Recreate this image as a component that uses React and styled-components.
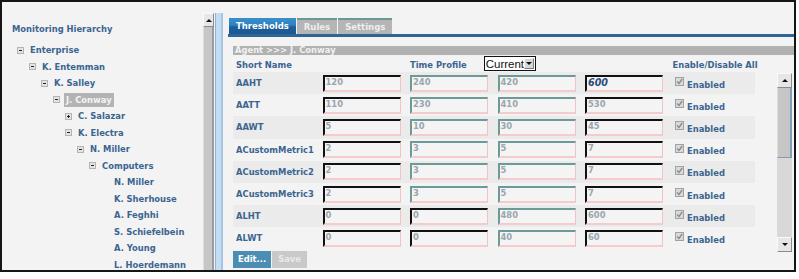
import React from "react"
import styled, { createGlobalStyle } from "styled-components"

const GlobalStyle = createGlobalStyle`
  body {
    margin: 0;
    background: #ffffff;
    font-family: "DejaVu Sans", Verdana, sans-serif;
  }
`;

const BLUE = "#3b6590";

const Frame = styled.div`
  width: 796px;
  height: 272px;
  box-sizing: border-box;
  border: 2px solid #151515;
  background: #f3f3f3;
  padding-top: 11px;
  display: flex;
  overflow: hidden;
`;

const LeftPanel = styled.div`
  width: 201px;
  flex: none;
  padding-left: 10px;
  box-sizing: border-box;
  overflow: hidden;
`;

const Heading = styled.div`
  margin-top: 8px;
  line-height: 16px;
  font-size: 8.4px;
  font-weight: 700;
  color: ${BLUE};
`;

const Tree = styled.div`
  margin-top: 4.75px;
  padding-left: 5px;
`;

const TreeRow = styled.div`
  display: flex;
  align-items: center;
  height: 16.5px;
  padding-left: ${p => p.$depth * 12}px;
  font-size: 8.4px;
  font-weight: 700;
  color: ${BLUE};
  white-space: nowrap;
`;

const Toggle = styled.span`
  position: relative;
  width: 7px;
  height: 7px;
  flex: none;
  margin-right: 6px;
  box-sizing: border-box;
  border: ${p => (p.$leaf ? "none" : "1px solid #b4b4b4")};
  background: ${p => (p.$leaf ? "transparent" : "#e4e4e4")};
  &::after {
    content: "";
    display: ${p => (p.$leaf ? "none" : "block")};
    position: absolute;
    left: 1px;
    top: 2px;
    width: 3px;
    height: 1px;
    background: #222;
  }
  &::before {
    content: "";
    display: ${p => (p.$closed ? "block" : "none")};
    position: absolute;
    left: 2px;
    top: 1px;
    width: 1px;
    height: 3px;
    background: #222;
  }
`;

const NodeLabel = styled.span`
  line-height: 14px;
  padding: 0 2px;
  margin-left: -2px;
  background: ${p => (p.$selected ? "#b3b3b3" : "transparent")};
  color: ${p => (p.$selected ? "#f4f4f4" : BLUE)};
`;

const VScroll = styled.div`
  width: ${p => p.$w}px;
  flex: none;
  display: flex;
  flex-direction: column;
  box-sizing: border-box;
  background: #d6d6d6;
`;

const ScrollBtn = styled.div`
  height: ${p => p.$h}px;
  flex: none;
  box-sizing: border-box;
  background: #e6e6e6;
  border: 1px solid;
  border-color: #fafafa #8a8a8a #8a8a8a #fafafa;
  display: flex;
  align-items: center;
  justify-content: center;
  &::after {
    content: "";
    border-left: 3px solid transparent;
    border-right: 3px solid transparent;
    ${p => (p.$down ? "border-top: 3px solid #111;" : "border-bottom: 3px solid #111;")}
  }
`;

const Thumb = styled.div`
  height: ${p => (p.$h ? `${p.$h}px` : "auto")};
  flex: ${p => (p.$h ? "none" : "1")};
  box-sizing: border-box;
  background: #c6c6c6;
  border-left: 1px solid #dedede;
  border-right: 2px solid ${p => p.$edge};
  border-bottom: ${p => (p.$h ? `1px solid ${p.$edge}` : "none")};
`;

const Track = styled.div`
  flex: 1;
  background: #d8d8d8;
`;

const Strip = styled.div`
  width: 8px;
  flex: none;
  margin-left: 1px;
  box-sizing: border-box;
  background: #c6dcf1;
  border-left: 1px solid #8fb4dc;
  border-right: 2px solid #a6c4e6;
`;

const RightPanel = styled.div`
  flex: 1;
  min-width: 0;
  display: flex;
  flex-direction: column;
`;

const TabBar = styled.div`
  display: flex;
  align-items: flex-end;
  margin: 5px 0 0 5px;
  padding-left: 1px;
  border-bottom: 3px solid #2f6596;
`;

const Tab = styled.div`
  height: 16px;
  line-height: ${p => (p.$active ? "16px" : "14px")};
  padding: 0 7px;
  margin-right: 1px;
  box-sizing: border-box;
  font-size: 8.5px;
  font-weight: 700;
  color: ${p => (p.$active ? "#ffffff" : "#eeeeee")};
  background: ${p =>
    p.$active
      ? "linear-gradient(#3a8fcb 0%, #2d82c2 45%, #1f5f9b 55%, #1b5790 100%)"
      : "#b5b5b5"};
  border-top: ${p => (p.$active ? "none" : "2px solid #6a9893")};
`;

const Content = styled.div`
  padding-left: 10px;
  display: flex;
  flex-direction: column;
`;

const Crumb = styled.div`
  margin-top: 9px;
  height: 9px;
  line-height: 9px;
  padding-left: 2px;
  background: #b1b1b1;
  color: #f2f2f2;
  font-size: 8.4px;
  font-weight: 700;
`;

const Body = styled.div`
  display: flex;
  align-items: flex-start;
`;

const Table = styled.div`
  width: 522px;
  flex: none;
`;

const GridRow = styled.div`
  display: grid;
  grid-template-columns: 80px repeat(4, 78px) 1fr;
  column-gap: 9.5px;
  align-items: center;
  height: ${p => p.$h}px;
  background: ${p => (p.$shade ? "#ebebeb" : "transparent")};
  font-size: 8.4px;
  font-weight: 700;
  color: ${BLUE};
`;

const NameCell = styled.div`
  padding-left: 3px;
  white-space: nowrap;
`;

const HeadName = styled.div`
  grid-column: 1 / span 2;
  padding-left: 3px;
  padding-top: 2px;
`;

const ProfileCell = styled.div`
  grid-column: 3 / span 3;
  display: flex;
  align-items: center;
`;

const ProfileLabel = styled.span`
  padding-top: 2px;
`;

const Select = styled.div`
  margin-left: 17px;
  width: 52px;
  height: 15px;
  box-sizing: border-box;
  border: 1px solid #111;
  background: #ffffff;
  display: flex;
  align-items: center;
  font-family: "Liberation Sans", Arial, sans-serif;
  font-weight: 400;
  font-size: 11.5px;
  color: #111;
  padding-left: 1px;
`;

const SelectText = styled.span`
  flex: 1;
`;

const SelectBtn = styled.span`
  width: 11px;
  height: 11px;
  margin-right: 1px;
  box-sizing: border-box;
  background: #d8d8d8;
  border: 1px solid;
  border-color: #f6f6f6 #7a7a7a #7a7a7a #f6f6f6;
  display: flex;
  align-items: center;
  justify-content: center;
  &::after {
    content: "";
    border-left: 3px solid transparent;
    border-right: 3px solid transparent;
    border-top: 3px solid #111;
  }
`;

const HeadAll = styled.div`
  justify-self: end;
  padding-right: 2px;
  padding-top: 2px;
  white-space: nowrap;
`;

const Field = styled.div`
  height: 17px;
  box-sizing: border-box;
  border-top: 2px solid ${p => (p.$tone === "d" ? "#111" : "#6d9a97")};
  border-left: 2px solid ${p => (p.$tone === "d" ? "#111" : "#6d9a97")};
  border-right: 1px solid #f0c4c4;
  border-bottom: 2px solid #f4cccc;
  background: #f4f4f4;
  padding-left: 1px;
  line-height: 11px;
  font-size: ${p => (p.$emph ? "9.6px" : "8.4px")};
  font-style: ${p => (p.$emph ? "italic" : "normal")};
  color: ${p => (p.$emph ? "#2d4b7b" : "#9aa5ad")};
`;

const EnabledCell = styled.div`
  display: flex;
  align-items: center;
  padding-left: 2.5px;
`;

const Check = styled.span`
  width: 9px;
  height: 9px;
  box-sizing: border-box;
  margin-top: -3px;
  margin-right: 3px;
  border: 1px solid #a2a2a2;
  background: #d9d9d9;
  display: flex;
`;

const EnabledText = styled.span`
  padding-top: 3px;
`;

const Buttons = styled.div`
  display: flex;
  gap: 1px;
  margin-top: 1.4px;
`;

const Button = styled.div`
  height: 17px;
  line-height: 17px;
  padding: 0 ${p => p.$pad}px;
  font-size: 8.4px;
  font-weight: 700;
  color: ${p => (p.$primary ? "#ffffff" : "#e9e9e9")};
  background: ${p => (p.$primary ? "#4c8db3" : "#c9c9c9")};
`;

const treeNodes = [
  { label: "Enterprise", depth: 0 },
  { label: "K. Entemman", depth: 1 },
  { label: "K. Salley", depth: 2 },
  { label: "J. Conway", depth: 3, selected: true },
  { label: "C. Salazar", depth: 4, closed: true },
  { label: "K. Electra", depth: 4 },
  { label: "N. Miller", depth: 5 },
  { label: "Computers", depth: 6 },
  { label: "N. Miller", depth: 7, leaf: true },
  { label: "K. Sherhouse", depth: 7, leaf: true },
  { label: "A. Feghhi", depth: 7, leaf: true },
  { label: "S. Schiefelbein", depth: 7, leaf: true },
  { label: "A. Young", depth: 7, leaf: true },
  { label: "L. Hoerdemann", depth: 7, leaf: true },
];

const metrics = [
  { name: "AAHT", vals: ["120", "240", "420", "600"], tones: "dttd", emph: 3 },
  { name: "AATT", vals: ["110", "230", "410", "530"], tones: "dttd" },
  { name: "AAWT", vals: ["5", "10", "30", "45"], tones: "dttd" },
  { name: "ACustomMetric1", vals: ["2", "3", "5", "7"], tones: "dttd" },
  { name: "ACustomMetric2", vals: ["2", "3", "5", "7"], tones: "dttd" },
  { name: "ACustomMetric3", vals: ["2", "3", "5", "7"], tones: "dttd" },
  { name: "ALHT", vals: ["0", "0", "480", "600"], tones: "ddtd" },
  { name: "ALWT", vals: ["0", "0", "40", "60"], tones: "ddtd" },
];

const CheckMark = () => (
  <svg width="7" height="7" viewBox="0 0 7 7">
    <path d="M1 3.5 L3 5.5 L6.2 1" fill="none" stroke="#8a8a8a" strokeWidth="1.3" />
  </svg>
);

const App = () => {
  return (
    <>
      <GlobalStyle />
      <Frame>
        <LeftPanel>
          <Heading>Monitoring Hierarchy</Heading>
          <Tree>
            {treeNodes.map((n, i) => (
              <TreeRow key={i} $depth={n.depth}>
                <Toggle $leaf={n.leaf} $closed={n.closed} />
                <NodeLabel $selected={n.selected}>{n.label}</NodeLabel>
              </TreeRow>
            ))}
          </Tree>
        </LeftPanel>

        <VScroll $w={11}>
          <ScrollBtn $h={14} />
          <Thumb $edge="#9c9c9c" />
        </VScroll>
        <Strip />

        <RightPanel>
          <TabBar>
            <Tab $active>Thresholds</Tab>
            <Tab>Rules</Tab>
            <Tab>Settings</Tab>
          </TabBar>
          <Content>
            <Crumb>Agent &gt;&gt;&gt; J. Conway</Crumb>
            <Body>
              <Table>
                <GridRow $h={17}>
                  <HeadName>Short Name</HeadName>
                  <ProfileCell>
                    <ProfileLabel>Time Profile</ProfileLabel>
                    <Select>
                      <SelectText>Current</SelectText>
                      <SelectBtn />
                    </Select>
                  </ProfileCell>
                  <HeadAll>Enable/Disable All</HeadAll>
                </GridRow>
                {metrics.map((m, i) => (
                  <GridRow key={m.name} $h={22.2} $shade={i % 2 === 0}>
                    <NameCell>{m.name}</NameCell>
                    {m.vals.map((v, j) => (
                      <Field key={j} $tone={m.tones[j]} $emph={m.emph === j}>
                        {v}
                      </Field>
                    ))}
                    <EnabledCell>
                      <Check>
                        <CheckMark />
                      </Check>
                      <EnabledText>Enabled</EnabledText>
                    </EnabledCell>
                  </GridRow>
                ))}
                <Buttons>
                  <Button $primary $pad={5}>Edit...</Button>
                  <Button $pad={6}>Save</Button>
                </Buttons>
              </Table>
              <VScroll $w={15} style={{ height: 179, marginTop: 18, marginLeft: 22 }}>
                <ScrollBtn $h={15} />
                <Thumb $h={70} $edge="#7f9cb9" />
                <Track />
                <ScrollBtn $h={15} $down />
              </VScroll>
            </Body>
          </Content>
        </RightPanel>
      </Frame>
    </>
  )
}

export default App
